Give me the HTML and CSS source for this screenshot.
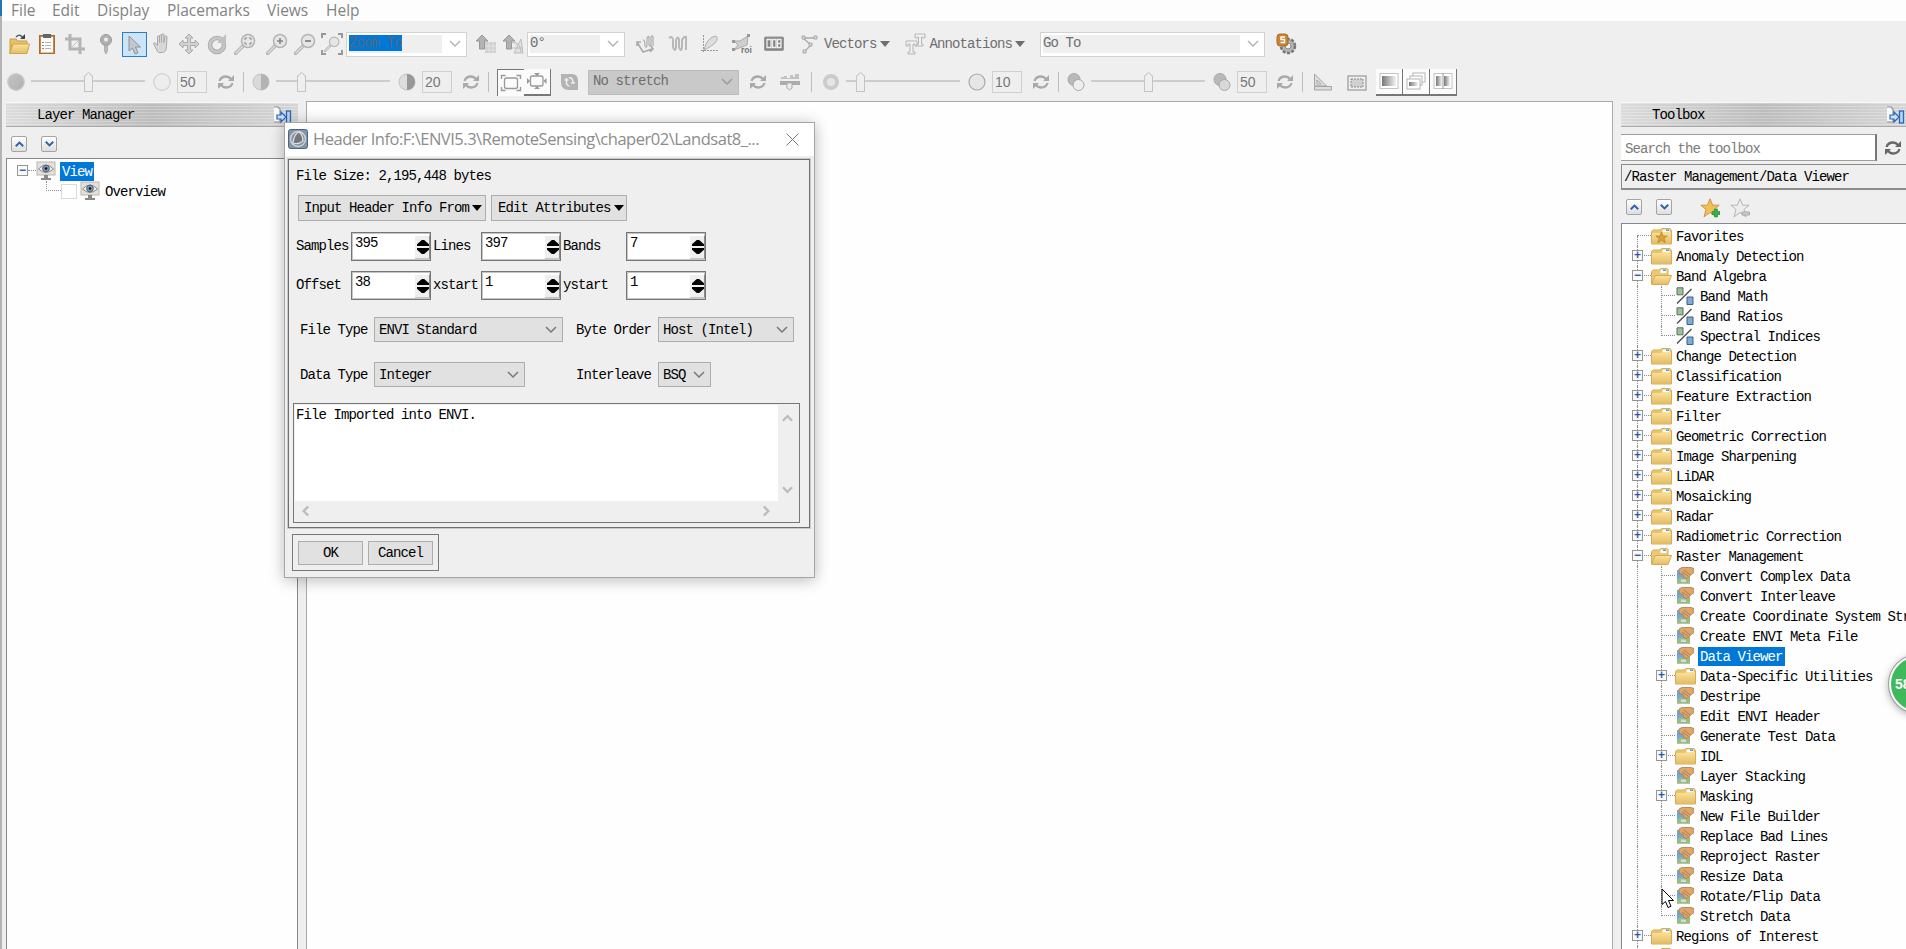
FILE: index.html
```
<!DOCTYPE html>
<html lang="en">
<head>
    <meta charset="UTF-8">
    <title>ENVI</title>
    <link rel="stylesheet" href="styles.css">
</head>
<body>
    <!-- icon sprite -->
    <svg class="sprite">
        <defs>
            <linearGradient id="gold" x1="0" y1="0" x2="0" y2="1"><stop offset="0" stop-color="#fbe29a"/><stop offset="1" stop-color="#e3bd66"/></linearGradient>
            <linearGradient id="ball" x1="0" y1="0" x2="1" y2="1"><stop offset="0" stop-color="#c4c4c4"/><stop offset="1" stop-color="#b0b0b0"/></linearGradient>
            <linearGradient id="fade" x1="0" y1="0" x2="1" y2="0"><stop offset="0" stop-color="#777"/><stop offset="1" stop-color="#f4f4f4"/></linearGradient>
        </defs>
        <symbol id="open" viewBox="0 0 22 22"><path d="M2 6h6l2 2h9v4H4l-2 8z" fill="#e8c06a" stroke="#c99b45"/><path d="M5 11h16.500l-2.500 9.500H1.500z" fill="url(#gold)" stroke="#d2a44b"/><path d="M8 4q4-4 7 1" fill="none" stroke="#555" stroke-width="1.300"/><path d="M17 1v5h-5z" fill="#444"/></symbol>
        <symbol id="clip" viewBox="0 0 22 22"><rect x="3.500" y="2.500" width="15" height="18" fill="#c98a45" stroke="#a36c30"/><path d="M5 4h12v15.500H5z" fill="#fbfbfb"/><path d="M7 1h8v4H7z" fill="#666"/><path d="M9 9.500h6M9 12.500h6M9 15.500h6" stroke="#b5b5b5"/><path d="M6 9.500h2M6 15.500h2" stroke="#d66"/><path d="M6 12.500h2" stroke="#5a9"/></symbol>
        <symbol id="crop" viewBox="0 0 22 22"><path d="M6 1v15h15M1 6h15v15" fill="none" stroke="#b4b4b4" stroke-width="3"/><path d="M8 14l6-6" stroke="#c4c4c4"/></symbol>
        <symbol id="pin" viewBox="0 0 22 22"><circle cx="11" cy="7" r="5.500" fill="#b0b0b0" stroke="#999"/><circle cx="11" cy="6.500" r="2" fill="#eee"/><path d="M9.500 12h3v6l-1.500 3-1.500-3z" fill="#b8b8b8" stroke="#999" stroke-width=".6"/></symbol>
        <symbol id="arrow" viewBox="0 0 22 22"><path d="M6 2v15l3.500-3 2.500 6 3-1.200-2.500-5.800h5z" fill="#c2c8cd" stroke="#8d9296"/></symbol>
        <symbol id="hand" viewBox="0 0 22 22"><path d="M6 19l-4-8 1.500-1L6 13V4q1-1.500 2 0v6V3q1-1.500 2 0v7V2q1.500-1.500 2.500 0v8l.5-6q1.500-1.500 2.500 0l-.5 10q0 5-3 6H7z" transform="translate(1.500 -.5)" fill="#d8d8d8" stroke="#a9a9a9"/></symbol>
        <symbol id="move" viewBox="0 0 22 22"><path d="M11 1l4 4h-2.500v4.500H17V7l4 4-4 4v-2.500h-4.500V17H15l-4 4-4-4h2.500v-4.500H5V15l-4-4 4-4v2.500h4.500V5H7z" fill="#d2d2d2" stroke="#aaa"/></symbol>
        <symbol id="rot" viewBox="0 0 22 22"><circle cx="11" cy="12" r="7" fill="none" stroke="#a4a4a4" stroke-width="4.500"/><circle cx="11" cy="12" r="7" fill="none" stroke="#c6c6c6" stroke-width="3"/><path d="M20 1v9h-9z" fill="#c0c0c0"/></symbol>
        <symbol id="glass" viewBox="0 0 22 22"><path d="M1.500 20.500L9 13" stroke="#b4b4b4" stroke-width="3.500" stroke-linecap="round"/><path d="M2 20L9 13" stroke="#ddd" stroke-width="1.500" stroke-linecap="round"/><circle cx="14" cy="8" r="6.500" fill="#e6e6e6" stroke="#b4b4b4" stroke-width="1.500"/></symbol>
        <symbol id="zdots" viewBox="0 0 22 22"><use href="#glass"/><path d="M11 7V5h2M15 5h2v2M17 9v2h-2M13 11h-2V9" fill="none" stroke="#888"/></symbol>
        <symbol id="zin" viewBox="0 0 22 22"><use href="#glass"/><path d="M11 8h6M14 5v6" stroke="#858585" stroke-width="1.600"/></symbol>
        <symbol id="zout" viewBox="0 0 22 22"><use href="#glass"/><path d="M11 8h6" stroke="#858585" stroke-width="1.800"/></symbol>
        <symbol id="zfit" viewBox="0 0 22 22"><use href="#glass" x="3" y="3" width="16" height="16"/><path d="M1 5V1h4M17 1h4v4M21 17v4h-4M5 21H1v-4" fill="none" stroke="#999" stroke-width="2"/></symbol>
        <symbol id="north" viewBox="0 0 22 22"><path d="M10 9h11v11H10z" fill="#d0d0d0"/><path d="M10 13h11M10 17h11M14 9v11M18 9v11" stroke="#e2e2e2"/><path d="M7 2l6 6h-3.500v8h-5V8H1z" fill="#b2b2b2" stroke="#999"/></symbol>
        <symbol id="north2" viewBox="0 0 22 22"><path d="M12 20l7-14 2 14zM9 9q9-1 10 10M10 15h11" fill="#e2e2e2" stroke="#bbb"/><path d="M7 2l6 6h-3.500v8h-5V8H1z" fill="#b2b2b2" stroke="#999"/></symbol>
        <symbol id="prof1" viewBox="0 0 22 22"><path d="M2 9l6 10 9-3M2 13V9h4M15 19l3-3-2-3" fill="none" stroke="#aaa" stroke-width="1.600"/><path d="M8 7q2 0 2 6 2 3 2-2V5q2-3 2 0v7q2 3 2-2V4q1-2 2 0v9" fill="none" stroke="#b0b0b0" stroke-width="1.300"/></symbol>
        <symbol id="prof2" viewBox="0 0 22 22"><path d="M2 5q4-3 4 3v6q2 6 3 0V7q2-5 3 0v7q2 6 3 0V7q2-4 4-3v13" fill="none" stroke="#b8b8b8" stroke-width="2"/></symbol>
        <symbol id="scat" viewBox="0 0 22 22"><path d="M4.500 2v18M2 17.500h18" stroke="#999" stroke-dasharray="2 1"/><path d="M5 17Q8 4 17 3q3 2-1 7-4 4-11 7z" fill="#dedede" stroke="#b0b0b0"/></symbol>
        <symbol id="count" viewBox="0 0 22 22"><rect x="1.500" y="4" width="19" height="13.500" rx="1" fill="#848484" stroke="#999"/><path d="M4 6.500h4v8H4zM9.500 6.500h3.500v8H9.500zM14.500 6.500H18v8h-3.500zM14.500 10.500H18" fill="#848484" stroke="#eee" stroke-width="1.300"/></symbol>
        <symbol id="vect" viewBox="0 0 22 22"><path d="M4 5h12M4 5l8 7-6 6" fill="none" stroke="#aaa" stroke-width="1.300"/><path d="M3 3h3v3H3zM15 3h3v3h-3zM10 10h3v3h-3zM4 17h3v3H4z" fill="#ddd" stroke="#999" stroke-width=".8"/></symbol>
        <symbol id="anno" viewBox="0 0 22 22"><path d="M10 1h10v4h-2V4h-1.500v7H18v2h-6v-2h1.500V4H12v1h-2zM1 8h11v5h-2v-2H8v8h2v2H3v-2h2v-8H3v2H1z" fill="#f2f2f2" stroke="#b4b4b4"/></symbol>
        <symbol id="gear" viewBox="0 0 22 22"><circle cx="13" cy="13" r="7" fill="#b5b5b5" stroke="#777" stroke-width="2.500" stroke-dasharray="3 1.500"/><circle cx="13" cy="13" r="3" fill="#eee" stroke="#888"/><rect x="2" y="1" width="11" height="12" rx="3" fill="#cb8434" stroke="#a96b28"/><path d="M10 4H6v2.500h3.500v3H5.500" fill="none" stroke="#fff" stroke-width="1.400"/></symbol>
        <symbol id="refresh" viewBox="0 0 18 18"><path d="M2.500 8Q4 3.500 9 3.500q3 0 5 2.500M15.500 10Q14 14.500 9 14.500q-3 0-5-2.500" fill="none" stroke="currentColor" stroke-width="2.300"/><path d="M17 2v6h-6zM1 16v-6h6z" fill="currentColor"/></symbol>
        <symbol id="dark" viewBox="0 0 18 18"><circle cx="9" cy="9" r="8.300" fill="url(#ball)" stroke="#cacaca" stroke-width="1.200"/></symbol>
        <symbol id="light" viewBox="0 0 18 18"><circle cx="9" cy="9" r="8.300" fill="#ededed" stroke="#d0d0d0" stroke-width="1.200"/></symbol>
        <symbol id="half" viewBox="0 0 18 18"><circle cx="9" cy="9" r="8" fill="#d9d9d9" stroke="#c3c3c3"/><path d="M9 1a8 8 0 0 1 0 16z" fill="#b3b3b3"/></symbol>
        <symbol id="half2" viewBox="0 0 18 18"><circle cx="9" cy="9" r="8" fill="#dedede" stroke="#c3c3c3"/><path d="M9 1a8 8 0 0 1 0 16z" fill="#989898"/></symbol>
        <symbol id="ring" viewBox="0 0 18 18"><circle cx="9" cy="9" r="6" fill="#e6e6e6" stroke="#cbcbcb" stroke-width="4"/></symbol>
        <symbol id="sharp" viewBox="0 0 18 18"><circle cx="9" cy="9" r="8" fill="#e6e6e6" stroke="#a8a8a8" stroke-width="1.200"/></symbol>
        <symbol id="trans" viewBox="0 0 18 18"><circle cx="7" cy="6.500" r="6" fill="#b9b9b9" stroke="#a8a8a8"/><circle cx="11.500" cy="12" r="5.500" fill="#eee" stroke="#a8a8a8"/></symbol>
        <symbol id="trans2" viewBox="0 0 18 18"><circle cx="7" cy="6.500" r="6" fill="#b9b9b9" stroke="#a8a8a8"/><circle cx="11.500" cy="12" r="5.500" fill="#d8d8d8" stroke="#a8a8a8"/></symbol>
        <symbol id="fitbox" viewBox="0 0 22 18"><rect x="4.500" y="4" width="13" height="10.500" rx="2" fill="none" stroke="#999" stroke-width="1.300"/><path d="M1.500 5V1.500h4M16.500 1.500h4V5M20.500 13v3.500h-4M5.500 16.500h-4V13" fill="none" stroke="#999" stroke-width="1.400"/></symbol>
        <symbol id="outbox" viewBox="0 0 22 18"><rect x="4.500" y="4" width="12.500" height="10" rx="2" fill="none" stroke="#999" stroke-width="1.300"/><path d="M8 1h6l-3 3zM8 17h6l-3-3zM1 6v6l3-3zM20.500 6v6l-3-3z" fill="#999"/></symbol>
        <symbol id="upd" viewBox="0 0 20 18"><path d="M1 1h11q6 0 6 7v9H9Q1 17 1 9z" fill="#b3b3b3"/><path d="M4.500 7h4M6.500 5v6q1 2 3 2M9 5q4-1 4 5M11 10h4" fill="none" stroke="#eee" stroke-width="1.500"/></symbol>
        <symbol id="hist" viewBox="0 0 22 18"><path d="M2 6V4h3V3h3v2h3V2h3v2h2V1h4v5z" fill="#c2c2c2"/><path d="M1 8h20v4H1z" fill="#adadad"/><path d="M8 10h5v5l-2.500 2L8 15z" fill="#eee" stroke="#aaa"/></symbol>
        <symbol id="ruler" viewBox="0 0 20 18"><path d="M1.500 1l12 12h-12zM4 7v4h4z" fill="#ddd" stroke="#a5a5a5" fill-rule="evenodd"/><path d="M1.500 13.500h17v3.500h-17z" fill="#ddd" stroke="#a5a5a5"/></symbol>
        <symbol id="pic" viewBox="0 0 20 18"><rect x="1" y="3" width="18" height="14" fill="#eee" stroke="#aaa" stroke-width="1.500"/><rect x="4" y="6" width="12" height="8" fill="#d0d0d0" stroke="#888" stroke-dasharray="2 1"/></symbol>
        <symbol id="grad" viewBox="0 0 20 18"><rect x="1" y="1.500" width="18" height="15" fill="#fff" stroke="#c4c4c4"/><rect x="3" y="4" width="14" height="10" fill="url(#fade)"/></symbol>
        <symbol id="stack" viewBox="0 0 20 18"><rect x="7" y="1" width="12" height="9" fill="#fff" stroke="#b4b4b4"/><rect x="4" y="4" width="12" height="9" fill="#fff" stroke="#b4b4b4"/><rect x="1" y="7" width="13" height="10" fill="#fff" stroke="#b4b4b4"/><rect x="3" y="10" width="9" height="4" fill="url(#fade)"/></symbol>
        <symbol id="split" viewBox="0 0 20 18"><rect x="1" y="1.500" width="18" height="15" fill="#fff" stroke="#c4c4c4"/><rect x="3" y="4" width="6" height="10" fill="url(#fade)"/><rect x="11" y="4" width="6" height="10" fill="url(#fade)"/><path d="M10 1v16" stroke="#999"/></symbol>
        <symbol id="pinout" viewBox="0 0 20 18"><path d="M2 1h4l2 2v13H2" fill="#f8f8f8" stroke="#8f8f8f" stroke-width="1.200"/><path d="M5 9h4V6l5 5-5 5v-3H5z" fill="#cfe2f8" stroke="#2a66b8" stroke-width="1.200"/><rect x="14.500" y="5" width="4" height="12" fill="#b6d3f5" stroke="#2a66b8" stroke-width="1.300"/></symbol>
        <symbol id="eye" viewBox="0 0 20 20"><rect x="1" y="1" width="18" height="13" fill="#e4e1dc" stroke="#bab6b0"/><path d="M8 14h4v3h3v2H5v-2h3z" fill="#8a8884"/><path d="M2.500 8q7.500-8 15 0-7.500 7-15 0z" fill="#f4f2f0" stroke="#888"/><circle cx="10" cy="7.500" r="3.400" fill="#7d96b4" stroke="#56677c"/><circle cx="10" cy="7.500" r="1.300" fill="#111"/></symbol>
        <symbol id="folder" viewBox="0 0 21 17"><path d="M.5 3.500L2 2h7l2-1.500h8l1.500 2V16H.5z" fill="#e8c46d" stroke="#d6ac58"/><path d="M11.500 1.500h7v3h-7z" fill="#fff"/><path d="M15 1.500h3v1.500h-3z" fill="#4a9fe0"/><path d="M1 5h9l2-1h8v11.500H1z" fill="url(#gold)"/></symbol>
        <symbol id="folder-open" viewBox="0 0 21 17"><path d="M.5 3.500L2 2h6l2-1.500h6l1 1V9L15 16H.5z" fill="#ecc977" stroke="#d6ac58"/><path d="M9.500 1.500h6V5h-6z" fill="#fff"/><path d="M12 1.500h3v1.500h-3z" fill="#4a9fe0"/><path d="M4 7.500h16.500L17 16.500H.7z" fill="url(#gold)" stroke="#d6aa52"/></symbol>
        <symbol id="folder-fav" viewBox="0 0 21 17"><use href="#folder"/><path d="M10.500 4l1.700 4h4l-3.200 2.500 1.300 4.200-3.800-2.500-3.800 2.500L8 10.500 4.800 8h4z" fill="#d8a23a" stroke="#b98324" stroke-width=".7"/></symbol>
        <symbol id="band" viewBox="0 0 18 18"><path d="M1 .8h6v7H1z" fill="#9cc09a" stroke="#55705a"/><path d="M11 10h6v7.500h-6z" fill="#7fabd8" stroke="#3f5f85"/><path d="M15.500 2L1 16.500" stroke="#4f4f4f" stroke-width="1.500"/></symbol>
        <symbol id="tool" viewBox="0 0 18 18"><path d="M1 3h13v13.500H1z" fill="#6da7df"/><path d="M1 13q3-4 6-2t7-3v8.500H1z" fill="#9dbb80"/><path d="M5 12.500h5V15H5z" fill="#d3e0cf"/><path d="M3 2l3-1.500h9l3 1v4l-4 3-3 3-3-1-1-3-4-1z" fill="#dda66c" stroke="#b07a45" stroke-width=".8"/><path d="M8 3l6 5M6 5l6 4" stroke="#a06a3a" stroke-width=".7"/></symbol>
        <symbol id="star-add" viewBox="0 0 20 20"><path d="M10 .8l2.700 6.400h6.500l-5.200 4.300 2 7.300-6-4.300-6 4.300 2-7.300L.8 7.200h6.500z" fill="#f0bf55" stroke="#c9974a"/><path d="M12 13.500h2.500V11h3v2.500H20v3h-2.500V19h-3v-2.500H12z" fill="#35b04a" stroke="#1f8533" stroke-width=".6"/></symbol>
        <symbol id="star-del" viewBox="0 0 20 20"><path d="M10 .8l2.700 6.400h6.500l-5.200 4.300 2 7.300-6-4.300-6 4.300 2-7.300L.8 7.200h6.500z" fill="#ededed" stroke="#b5b5b5"/><path d="M12 14h7.500v3H12z" fill="#ccc" stroke="#a5a5a5"/></symbol>
        <symbol id="envi" viewBox="0 0 20 20"><rect x=".5" y=".5" width="19" height="19" rx="2" fill="#8593a3" stroke="#44658c"/><circle cx="10" cy="10" r="7.500" fill="#8b9096" stroke="#cdd2d8" stroke-width="1.500"/><path d="M5 14q1-9 6-11 4 3 4 9-5 4-10 2z" fill="#73787f" stroke="#dde0e4" stroke-width="1.300"/></symbol>
        <symbol id="chev" viewBox="0 0 12 8"><path d="M1 1l5 5 5-5" fill="none" stroke="currentColor"/></symbol>
    </svg>

    <div id="menu">
        <a class="file">File</a><a class="edit">Edit</a><a class="display">Display</a><a class="place">Placemarks</a><a class="views">Views</a><a>Help</a>
    </div>

    <div id="toolbar">
        <div class="row row1">
            <svg class="ic"><use href="#open"/></svg>
            <svg class="ic m6"><use href="#clip"/></svg>
            <svg class="ic m6"><use href="#crop"/></svg>
            <svg class="ic m9"><use href="#pin"/></svg>
            <span class="picked m5"><svg class="ic"><use href="#arrow"/></svg></span>
            <svg class="ic m3"><use href="#hand"/></svg>
            <svg class="ic m6"><use href="#move"/></svg>
            <svg class="ic m6"><use href="#rot"/></svg>
            <svg class="ic m6"><use href="#zdots"/></svg>
            <svg class="ic m10"><use href="#zin"/></svg>
            <svg class="ic m6"><use href="#zout"/></svg>
            <svg class="ic m5"><use href="#zfit"/></svg>
            <div class="combo zoomTo m3"><p><em>Zoom To</em></p><svg class="chev"><use href="#chev"/></svg></div>
            <svg class="ic m8"><use href="#north"/></svg>
            <svg class="ic m5"><use href="#north2"/></svg>
            <div class="combo angle m3"><p>0°</p><svg class="chev"><use href="#chev"/></svg></div>
            <svg class="ic m10"><use href="#prof1"/></svg>
            <svg class="ic m10"><use href="#prof2"/></svg>
            <svg class="ic m10"><use href="#scat"/></svg>
            <svg class="ic m10" viewBox="0 0 22 22"><path d="M3 8h6l8-5-1 9-5 2-8 3 4-5z" fill="#cfcfcf" stroke="#aaa"/><path d="M1 7h3v3H1zM16 1h3v3h-3zM1 15h3v3H1z" fill="#999"/><text x="10" y="20" class="roi">roi</text></svg>
            <svg class="ic m10"><use href="#count"/></svg>
            <svg class="ic m14"><use href="#vect"/></svg>
            <span class="drop vectors m3">Vectors<i class="tri"></i></span>
            <svg class="ic m15"><use href="#anno"/></svg>
            <span class="drop m3">Annotations<i class="tri"></i></span>
            <div class="combo goTo m15"><p>Go To</p><svg class="chev"><use href="#chev"/></svg></div>
            <svg class="ic m10"><use href="#gear"/></svg>
        </div>
        <div class="row row2">
            <svg class="sm"><use href="#dark"/></svg>
            <div class="slider m6"><i class="mid"></i></div>
            <svg class="sm m8"><use href="#light"/></svg>
            <span class="num m6">50</span>
            <svg class="sm m10"><use href="#refresh"/></svg>
            <i class="sep m8"></i>
            <svg class="sm m8"><use href="#half"/></svg>
            <div class="slider m6"><i class="low"></i></div>
            <svg class="sm m8"><use href="#half2"/></svg>
            <span class="num m6">20</span>
            <svg class="sm m10"><use href="#refresh"/></svg>
            <i class="sep m8"></i>
            <span class="btn down m8"><svg class="wide"><use href="#fitbox"/></svg></span>
            <span class="btn"><svg class="wide"><use href="#outbox"/></svg></span>
            <svg class="md m9"><use href="#upd"/></svg>
            <div class="combo stretch m8"><p>No stretch</p><svg class="chev"><use href="#chev"/></svg></div>
            <svg class="sm m10"><use href="#refresh"/></svg>
            <svg class="wide m12"><use href="#hist"/></svg>
            <i class="sep m10"></i>
            <svg class="sm m10"><use href="#ring"/></svg>
            <div class="slider m6"><i class="min"></i></div>
            <svg class="sm m8"><use href="#sharp"/></svg>
            <span class="num n2 m6">10</span>
            <svg class="sm m10"><use href="#refresh"/></svg>
            <i class="sep m8"></i>
            <svg class="sm m8"><use href="#trans"/></svg>
            <div class="slider m6"><i class="mid"></i></div>
            <svg class="sm m8"><use href="#trans2"/></svg>
            <span class="num n2 m6">50</span>
            <svg class="sm m9"><use href="#refresh"/></svg>
            <i class="sep m8"></i>
            <svg class="md m10"><use href="#ruler"/></svg>
            <svg class="md m14"><use href="#pic"/></svg>
            <span class="btn b3 m9"><svg class="md"><use href="#grad"/></svg></span>
            <span class="btn b3"><svg class="md"><use href="#stack"/></svg></span>
            <span class="btn b3"><svg class="md"><use href="#split"/></svg></span>
        </div>
    </div>

    <div id="main">
        <div id="layers">
            <h2>Layer Manager<svg class="md"><use href="#pinout"/></svg></h2>
            <div class="tools">
                <span class="arrowBtn up"><svg><use href="#chev"/></svg></span>
                <span class="arrowBtn"><svg><use href="#chev"/></svg></span>
            </div>
            <ul class="tree">
                <li><span class="gut root"><b>−</b></span><svg class="eye"><use href="#eye"/></svg><a class="current">View</a></li>
                <li><span class="gut child"></span><i class="check"></i><svg class="eye"><use href="#eye"/></svg><a>Overview</a></li>
            </ul>
        </div>
        <div id="canvas"></div>
        <div id="toolbox">
            <h2>Toolbox<svg class="md"><use href="#pinout"/></svg></h2>
            <div class="search"><span>Search the toolbox</span><svg class="sm"><use href="#refresh"/></svg></div>
            <div class="path">/Raster Management/Data Viewer</div>
            <div class="tools">
                <span class="arrowBtn up"><svg><use href="#chev"/></svg></span>
                <span class="arrowBtn"><svg><use href="#chev"/></svg></span>
                <svg class="star"><use href="#star-add"/></svg>
                <svg class="star"><use href="#star-del"/></svg>
            </div>
            <ul class="tree" id="toolTree"></ul>
        </div>
    </div>

    <div id="dialog">
        <div class="title"><svg class="logo"><use href="#envi"/></svg><span>Header Info:F:\ENVI5.3\RemoteSensing\chaper02\Landsat8_...</span>
            <svg class="close" viewBox="0 0 13 13"><path d="M.5.5l12 12M12.500.5l-12 12" stroke="#777" fill="none"/></svg>
        </div>
        <div class="frame">
            <p class="size">File Size: 2,195,448 bytes</p>
            <div class="buttons">
                <span class="pull from">Input Header Info From<i class="tri"></i></span>
                <span class="pull attr">Edit Attributes<i class="tri"></i></span>
            </div>
            <div class="nums">
                <label>Samples</label><span class="spin">395<i></i></span>
                <label>Lines</label><span class="spin">397<i></i></span>
                <label>Bands</label><span class="spin">7<i></i></span>
                <label>Offset</label><span class="spin">38<i></i></span>
                <label>xstart</label><span class="spin">1<i></i></span>
                <label>ystart</label><span class="spin">1<i></i></span>
            </div>
            <div class="types">
                <label>File Type</label><div><span class="select s1">ENVI Standard<svg><use href="#chev"/></svg></span></div>
                <label>Byte Order</label><div><span class="select s2">Host (Intel)<svg><use href="#chev"/></svg></span></div>
                <label>Data Type</label><div><span class="select s3">Integer<svg><use href="#chev"/></svg></span></div>
                <label>Interleave</label><div><span class="select s4">BSQ<svg><use href="#chev"/></svg></span></div>
            </div>
            <div class="desc">
                <div class="text">File Imported into ENVI.</div>
                <div class="vbar"><svg class="u"><use href="#chev"/></svg><svg><use href="#chev"/></svg></div>
                <div class="hbar"><svg class="l"><use href="#chev"/></svg><svg class="r"><use href="#chev"/></svg></div>
            </div>
        </div>
        <div class="ok"><span>OK</span><span>Cancel</span></div>
    </div>

    <div id="badge">58%</div>
    <svg id="cursor" viewBox="0 0 13 20"><path d="M1 1v15.500l3.500-3 2.500 6 3-1.200-2.500-5.800h5z" fill="#fff" stroke="#000"/></svg>

    <script>
        // level, type (+ closed, - open, . leaf), icon, name
        var data = [
            [1, ".", "folder-fav", "Favorites"],
            [1, "+", "folder", "Anomaly Detection"],
            [1, "-", "folder-open", "Band Algebra"],
            [2, ".", "band", "Band Math"],
            [2, ".", "band", "Band Ratios"],
            [2, ".", "band", "Spectral Indices", "last"],
            [1, "+", "folder", "Change Detection"],
            [1, "+", "folder", "Classification"],
            [1, "+", "folder", "Feature Extraction"],
            [1, "+", "folder", "Filter"],
            [1, "+", "folder", "Geometric Correction"],
            [1, "+", "folder", "Image Sharpening"],
            [1, "+", "folder", "LiDAR"],
            [1, "+", "folder", "Mosaicking"],
            [1, "+", "folder", "Radar"],
            [1, "+", "folder", "Radiometric Correction"],
            [1, "-", "folder-open", "Raster Management"],
            [2, ".", "tool", "Convert Complex Data"],
            [2, ".", "tool", "Convert Interleave"],
            [2, ".", "tool", "Create Coordinate System String"],
            [2, ".", "tool", "Create ENVI Meta File"],
            [2, ".", "tool", "Data Viewer", "current"],
            [2, "+", "folder", "Data-Specific Utilities"],
            [2, ".", "tool", "Destripe"],
            [2, ".", "tool", "Edit ENVI Header"],
            [2, ".", "tool", "Generate Test Data"],
            [2, "+", "folder", "IDL"],
            [2, ".", "tool", "Layer Stacking"],
            [2, "+", "folder", "Masking"],
            [2, ".", "tool", "New File Builder"],
            [2, ".", "tool", "Replace Bad Lines"],
            [2, ".", "tool", "Reproject Raster"],
            [2, ".", "tool", "Resize Data"],
            [2, ".", "tool", "Rotate/Flip Data"],
            [2, ".", "tool", "Stretch Data", "last"],
            [1, "+", "folder", "Regions of Interest"],
            [1, ".", "folder", ""]
        ];
        var html = "";
        for(var i = 0;i < data.length; i++){
            var d = data[i];
            var box = d[1] == "." ? "" : "<b>" + (d[1] == "+" ? "+" : "−") + "</b>";
            var gut = "<span class=\"gut" + (d[0] == 1 ? " tick" : "") + (i == 0 ? " first" : "") + "\">" + (d[0] == 1 ? box : "") + "</span>";
            if(d[0] == 2){
                gut += "<span class=\"gut sub tick " + (d[4] == "last" ? "last" : "") + "\">" + box + "</span>";
            }
            html += "<li>" + gut + "<svg class=\"" + d[2] + "\"><use href=\"#" + d[2] + "\"/></svg><a class=\"" + (d[4] == "current" ? "current" : "") + "\">" + d[3] + "</a></li>";
        }
        document.getElementById("toolTree").innerHTML = html;
    </script>
</body>
</html>
```
FILE: styles.css
```
body,div,h2,ul,li,p,span,em{margin: 0; padding: 0;}
*{box-sizing: border-box;}
ul,li{list-style: none;}
em,i{font-style: normal;}
svg{display: block; flex: none;}
body{width: 1906px; height: 949px; overflow: hidden; background-color: #efefef; display: flex; flex-direction: column; font: 14px/20px "Liberation Mono",monospace; letter-spacing: -0.9px; color: #000; position: relative; white-space: nowrap;}
.sprite{position: absolute; width: 0; height: 0;}

#menu{height: 21px; background: linear-gradient(#1f74b3 16px,#b4b4b4 16px) 0 0/2px 21px no-repeat #fdfdfd; display: flex; padding-left: 11px; font: 15.5px/21px "Open Sans",sans-serif; letter-spacing: 0; color: #828282;}
#menu .file{width: 41px;}
#menu .edit{width: 45px;}
#menu .display{width: 70px;}
#menu .place{width: 100px;}
#menu .views{width: 59px;}

#toolbar{height: 80px; border-left: 2px solid #b4b4b4;}
#toolbar .row{display: flex; align-items: center; color: #6e6e6e;}
#toolbar .row1{height: 46px; padding-left: 6px;}
#toolbar .row2{height: 30px; padding-left: 5px;}
.ic{width: 22px; height: 22px;}
.sm{width: 18px; height: 18px; color: #a9a9a9;}
.md{width: 20px; height: 18px;}
.wide{width: 22px; height: 18px;}
.m3{margin-left: 3px;}
.m5{margin-left: 5px;}
.m6{margin-left: 6px;}
.m8{margin-left: 8px;}
.m9{margin-left: 9px;}
.m10{margin-left: 10px;}
.m12{margin-left: 12px;}
.m14{margin-left: 14px;}
.m15{margin-left: 15px;}
.roi{font: bold 8.5px "Liberation Sans",sans-serif; letter-spacing: 0; fill: #777;}
.picked{width: 25px; height: 25px; border: 1px solid #2a7fc4; background-color: #cce4f7; padding: 1px 0;}
.combo{height: 25px; border: 1px solid #d2d2d2; background-color: #fff; padding: 2px; display: flex; align-items: center; flex: none;}
.combo p{flex: 1; height: 18px; line-height: 17px; background-color: #efefef; margin-right: 7px; margin-top: -1px;}
.combo em{display: inline-block; height: 16px; line-height: 17px; background-color: #0078d7; color: #56677a; vertical-align: top;}
.chev{width: 12px; height: 8px; color: #b5b5b5; margin-right: 3px; stroke-width: 1.5px;}
.zoomTo{width: 121px;}
.angle{width: 98px;}
.goTo{width: 225px;}
.stretch{width: 151px; background-color: #c9c9c9; border-color: #bdbdbd;}
.stretch p{background: none; padding-left: 2px;}
.stretch .chev{color: #9b9b9b;}
.drop{display: flex; align-items: center; height: 22px;}
.tri{width: 0; height: 0; border: 5px solid transparent; border-top: 6px solid #6e6e6e; border-bottom: 0; margin-left: 3px;}
.num{width: 30px; height: 22px; border: 1px solid #cfcfcf; padding-left: 2px; font: 14px/21px "Liberation Sans",sans-serif; letter-spacing: 0; color: #777;}
.slider{width: 114px; height: 20px; position: relative; flex: none;}
.slider:before{content: ""; position: absolute; left: 0; right: 0; top: 8px; height: 2px; background-color: #cdcdcd;}
.slider i{position: absolute; top: 0; width: 9px; height: 20px; background-color: #c4c4c4; clip-path: polygon(50% 0,100% 20%,100% 100%,0 100%,0 20%);}
.slider i:after{content: ""; position: absolute; left: 1px; right: 1px; top: 1px; bottom: 1px; background-color: #efefef; clip-path: polygon(50% 0,100% 20%,100% 100%,0 100%,0 20%);}
.slider .mid{left: 53px;}
.slider .low{left: 21px;}
.slider .min{left: 10px;}
.sep{width: 1px; height: 20px; background-color: #bdbdbd;}
.btn{width: 27px; height: 27px; background-color: #fbfbfb; border-right: 1px solid #777; border-bottom: 2px solid #777; display: flex; align-items: center; justify-content: center;}
.down{border: 0; border-top: 1px solid #777; border-left: 1px solid #777;}

#main{flex: 1; display: flex; min-height: 0; border-left: 2px solid #b4b4b4;}
#layers{width: 304px; padding: 1px 8px 0 4px; display: flex; flex-direction: column; flex: none;}
h2{height: 25px; display: flex; align-items: center; justify-content: space-between; font-size: 14px; font-weight: normal; background: repeating-linear-gradient(180deg,rgba(255,255,255,.15) 0 1px,rgba(0,0,0,.03) 1px 3px),linear-gradient(90deg,#e2e2e2,#c3c3c3 50%,#dcdcdc); border-bottom: 1px solid #aaa; border-top: 1px solid #f8f8f8; padding: 1px 6px 0 31px;}
.tools{display: flex; height: 31px; padding: 9px 0 0 5px;}
.arrowBtn{width: 16px; height: 16px; border: 1px solid #a4a4a4; border-radius: 2px; background: linear-gradient(#fff,#dedede); margin-right: 14px; display: flex; align-items: center; justify-content: center;}
.arrowBtn svg{width: 9px; height: 6px; color: #2a62ad; stroke-width: 2.5px;}
.arrowBtn.up svg,.vbar .u{transform: rotate(180deg);}
.tree{flex: 1; background-color: #fefefe; border-top: 1px solid #828790; border-left: 1px solid #828790; overflow: hidden;}
.tree li{height: 20px; display: flex; align-items: center;}
.tree a{padding: 0 2px; height: 19px; line-height: 20px;}
.tree .current{background-color: #0078d7; color: #fff;}
#layers .tree{padding-top: 2px; border-right: 1px solid #828790;}
.eye{width: 20px; height: 20px; margin-right: 4px;}
.gut{position: relative; width: 28px; height: 20px; flex: none;}
.gut:before{content: ""; position: absolute; left: 14px; top: 0; bottom: 0; border-left: 1px dotted #8c8c8c;}
.gut.tick:after{content: ""; position: absolute; left: 14px; right: 0; top: 9px; border-top: 1px dotted #8c8c8c;}
.gut.first:before{top: 10px;}
.gut.last:before{bottom: 10px;}
.gut.sub{width: 24px;}
.gut.sub:before,.gut.sub.tick:after{left: 10px;}
.gut b{position: absolute; z-index: 1; left: 9px; top: 4px; width: 11px; height: 11px; border: 1px solid #969696; background-color: #fafafa; font: bold 12px/9px "Liberation Sans",sans-serif; letter-spacing: 0; color: #2a5aa5; text-align: center;}
.gut.sub b{left: 5px;}
.gut.root:before{display: none;}
.gut.root{width: 29px;}
.gut.root b{left: 10px;}
.gut.root:after{content: ""; position: absolute; left: 21px; right: 0; top: 9px; border-top: 1px dotted #8c8c8c;}
.gut.child{width: 54px;}
.gut.child:before{left: 39px; bottom: 10px;}
.gut.child:after{content: ""; position: absolute; left: 39px; right: 0; top: 9px; border-top: 1px dotted #8c8c8c;}
.check{width: 16px; height: 15px; border: 1px solid #dadada; background-color: #fff; margin-right: 3px;}
.check + .eye{margin-right: 3px;}
#canvas{flex: 1; background-color: #fefefe; border: 1px solid #a9a9a9; border-bottom: 0;}
#toolbox{width: 293px; padding: 1px 0 0 8px; display: flex; flex-direction: column; flex: none;}
#toolbox h2{padding-right: 1px;}
#toolbox .search{display: flex; align-items: center; height: 27px; margin-top: 7px;}
.search span{width: 256px; height: 27px; line-height: 28px; border: 1px solid #9d9d9d; border-right: 2px solid #777; border-left: 0; background-color: #fff; color: #7c7c7c; padding-left: 4px;}
.search .sm{color: #666; margin-left: 7px;}
.path{height: 26px; line-height: 24px; margin-top: 3px; border: 1px solid #8c8c8c; border-bottom-width: 2px; border-right: 0; padding-left: 2px;}
#toolbox .tools{height: 33px;}
.star{width: 20px; height: 20px; margin: -1px 0 0 10px;}
.arrowBtn + .star{margin-left: 14px;}
#toolbox .tree{padding: 2px 0 0 1px;}
.folder,.folder-open,.folder-fav{width: 21px; height: 17px; margin-right: 2px;}
.tool,.band{width: 18px; height: 18px; margin: 0 4px 0 1px;}

#dialog{position: absolute; left: 284px; top: 122px; width: 531px; height: 456px; background-color: #efefef; border: 1px solid #a5a5a5; box-shadow: 0 2px 14px rgba(0,0,0,.28);}
#dialog .title{height: 33px; background-color: #fff; display: flex; align-items: center; padding: 0 15px 0 3px; font: 16.5px/30px "Open Sans",sans-serif; letter-spacing: -0.48px; color: #8c8c8c;}
.title span{margin-top: -2px;}
.title .logo{width: 20px; height: 20px; margin: -2px 5px 0 0;}
.title .close{width: 13px; height: 13px; margin-left: auto;}
#dialog .frame{margin: 3px 4px 0 3px; height: 369px; border: 1px solid #6e6e6e; outline: 1px solid #c9c9c9; padding-left: 4px;}
.frame .size{margin: 6px 0 0 3px; height: 20px;}
.frame .buttons{display: flex; padding: 9px 0 0 5px;}
.pull{height: 26px; border: 1px solid #adadad; background-color: #e1e1e1; display: flex; align-items: center; padding-left: 5px; margin-right: 5px;}
.pull .tri{border-top-color: #000;}
.pull.from{width: 188px;}
.pull.attr{width: 136px; padding-left: 6px;}
.nums{display: grid; grid-template-columns: 55px 82px 48px 82px 63px 80px; row-gap: 10px; margin: 11px 0 0 3px;}
.nums label{line-height: 29px;}
.spin{width: 80px; height: 29px; border: 1px solid #777; outline: 1px solid #c5c5c5; outline-offset: -2px; background-color: #fff; line-height: 21px; padding-left: 3px; display: block; position: relative;}
.spin i{position: absolute; right: 0; top: 3px; width: 15px; bottom: 1px; background-color: #efefef; border-right: 1px solid #8a8a8a; border-bottom: 1px solid #c5c5c5;}
.spin i:before,.spin i:after{content: ""; position: absolute; left: 2px; width: 12px; height: 6px; background-color: #000;}
.spin i:before{top: 4px; clip-path: polygon(40% 0,60% 0,100% 70%,100% 100%,0 100%,0 70%);}
.spin i:after{top: 12px; clip-path: polygon(0 0,100% 0,100% 30%,60% 100%,40% 100%,0 30%);}
.types{display: grid; grid-template-columns: 74px 202px 82px 140px; row-gap: 18px; margin: 17px 0 0 7px;}
.types label{line-height: 27px;}
.select{height: 25px; line-height: 24px; border: 1px solid #adadad; background-color: #e1e1e1; padding: 0 5px 0 4px; display: flex; align-items: center; justify-content: space-between;}
.select svg{width: 12px; height: 8px; color: #777; stroke-width: 1.5px;}
.select.s1{width: 189px;}
.select.s2{width: 136px;}
.select.s3{width: 151px;}
.select.s4{width: 53px;}
.desc{margin-top: 14px; width: 507px; height: 120px; border: 1px solid #777; padding: 1px; display: grid; grid-template: 96px 20px / 483px 20px;}
.desc .text{background-color: #fff; padding-left: 1px;}
.desc svg{width: 11px; height: 8px; color: #bcbcbc; stroke-width: 2.5px;}
.vbar{display: flex; flex-direction: column; justify-content: space-between; align-items: center; padding: 9px 2px 7px 0;}
.hbar{display: flex; justify-content: space-between; align-items: center; padding: 0 6px 0 5px;}
.hbar .l{transform: rotate(90deg);}
.hbar .r{transform: rotate(-90deg);}
#dialog .ok{margin: 6px 0 0 7px; width: 147px; height: 37px; border: 1px solid #777; display: flex; gap: 5px; padding: 6px 5px;}
.ok span{width: 65px; height: 24px; line-height: 22px; border: 1px solid #adadad; background-color: #e1e1e1; text-align: center;}

#badge{position: absolute; left: 1889px; top: 655px; width: 58px; height: 58px; border-radius: 50%; background-color: #3fb95c; border: 2px solid #fff; box-shadow: 0 0 0 1px #999,0 2px 8px rgba(0,0,0,.4); color: #fff; font: bold 14px/54px "Liberation Sans",sans-serif; letter-spacing: 0; padding-left: 4px;}
#cursor{position: absolute; left: 1661px; top: 888px; width: 13px; height: 20px;}
```
